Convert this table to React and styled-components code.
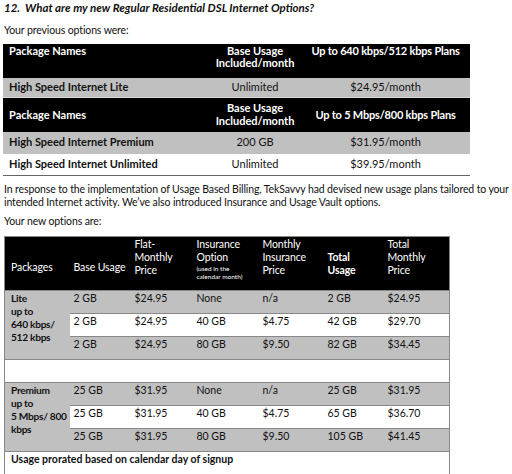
import React from "react";
import styled, { createGlobalStyle } from "styled-components";

const Global = createGlobalStyle`
  html, body { margin: 0; padding: 0; background: #fff; }
  body { font-family: Lato, "Open Sans", sans-serif; color: #111; }
`;

const Page = styled.div`
  width: 512px;
  height: 474px;
  overflow: hidden;
  padding: 1px 0 0 4px;
  box-sizing: border-box;
  font-size: 11px;
`;

const Title = styled.h2`
  margin: 0;
  font-size: 11.5px;
  font-weight: 700;
  font-style: italic;
  line-height: 13px;
`;

const Para = styled.p`
  margin: ${(p) => p.$mt || 0}px 0 0 0;
  font-size: 10.5px;
  line-height: 12.5px;
  letter-spacing: -0.12px;
  white-space: nowrap;
`;

const OldTable = styled.table`
  margin: 7px 0 0 -1px;
  width: 467px;
  border-collapse: collapse;
  table-layout: fixed;
  font-size: 11px;
  line-height: 12.5px;
  border-bottom: 1px solid #666;
`;

const OldHead = styled.tr`
  background: #000;
  color: #fff;
  font-weight: 700;
  height: ${(p) => p.$h}px;
  border-top: ${(p) => (p.$sep ? "1px solid #d8d8d8" : "none")};
`;

const OldRow = styled.tr`
  background: ${(p) => (p.$grey ? "#c0c0c0" : "#fff")};
  height: ${(p) => p.$h}px;
`;

const OldCell = styled.td`
  padding: 0 6px;
  vertical-align: ${(p) => p.$v || "middle"};
  text-align: ${(p) => p.$align || "left"};
  font-weight: ${(p) => (p.$bold ? 700 : "inherit")};
  padding-top: ${(p) => p.$pt || 0}px;
  white-space: nowrap;
  letter-spacing: ${(p) => p.$ls || 0}px;
`;

const NewTable = styled.table`
  margin: 8px 0 0 0;
  width: 445px;
  border-collapse: collapse;
  table-layout: fixed;
  font-size: 10.5px;
  line-height: 13px;
  border: 1px solid #888;
`;

const NewHead = styled.tr`
  background: #000;
  color: #fff;
  height: 54px;
`;

const HeadCell = styled.th`
  text-align: left;
  font-weight: ${(p) => (p.$bold ? 700 : 400)};
  vertical-align: top;
  white-space: nowrap;
  letter-spacing: -0.1px;
  padding: ${(p) => p.$pt}px 0 0 ${(p) => p.$pl || 4}px;
`;

const Small = styled.span`
  display: block;
  font-size: 6.5px;
  line-height: 8px;
  letter-spacing: 0;
  margin-top: 1px;
`;

const Row = styled.tr`
  background: ${(p) => (p.$grey ? "#c0c0c0" : "#fff")};
  height: 23px;
  border-top: 1px solid #888;
`;

const Cell = styled.td`
  vertical-align: top;
  white-space: nowrap;
  padding: 1px 0 0 ${(p) => p.$pl || 4}px;
  font-weight: ${(p) => (p.$bold ? 700 : 400)};
`;

const GroupCell = styled.td`
  background: #c0c0c0;
  vertical-align: top;
  font-weight: 700;
  font-size: 10.2px;
  white-space: nowrap;
  letter-spacing: -0.3px;
  padding: 1px 0 0 6px;
  line-height: 13px;
`;

const liteRows = [
  ["2 GB", "$24.95", "None", "n/a", "2 GB", "$24.95"],
  ["2 GB", "$24.95", "40 GB", "$4.75", "42 GB", "$29.70"],
  ["2 GB", "$24.95", "80 GB", "$9.50", "82 GB", "$34.45"],
];
const premRows = [
  ["25 GB", "$31.95", "None", "n/a", "25 GB", "$31.95"],
  ["25 GB", "$31.95", "40 GB", "$4.75", "65 GB", "$36.70"],
  ["25 GB", "$31.95", "80 GB", "$9.50", "105 GB", "$41.45"],
];

const widths = [65, 61, 62, 66, 65, 60, 66];

function Group({ label, rows }) {
  return rows.map((r, i) => (
    <Row key={i} $grey={i !== 1}>
      {i === 0 && <GroupCell rowSpan={3}>{label}</GroupCell>}
      {r.map((c, j) => (
        <Cell key={j}>{c}</Cell>
      ))}
    </Row>
  ));
}

export default function App() {
  return (
    <Page>
      <Global />
      <Title>12.&nbsp;&nbsp;What are my new Regular Residential DSL Internet Options?</Title>
      <Para $mt={10}>Your previous options were:</Para>
      <OldTable>
        <colgroup>
          <col style={{ width: 206 }} />
          <col style={{ width: 92 }} />
          <col />
        </colgroup>
        <tbody>
          <OldHead $h={34}>
            <OldCell $v="top" $pt={1}>Package Names</OldCell>
            <OldCell $v="top" $pt={1} $align="center">Base Usage<br />Included/month</OldCell>
            <OldCell $v="top" $pt={1} $align="center" $ls={-0.2}>Up to 640 kbps/512 kbps Plans</OldCell>
          </OldHead>
          <OldRow $grey $h={20}>
            <OldCell $bold>High Speed Internet Lite</OldCell>
            <OldCell $align="center">Unlimited</OldCell>
            <OldCell $align="center">$24.95/month</OldCell>
          </OldRow>
          <OldHead $h={34} $sep>
            <OldCell>Package Names</OldCell>
            <OldCell $align="center">Base Usage<br />Included/month</OldCell>
            <OldCell $align="center" $ls={-0.2}>Up to 5 Mbps/800 kbps Plans</OldCell>
          </OldHead>
          <OldRow $grey $h={22}>
            <OldCell $bold>High Speed Internet Premium</OldCell>
            <OldCell $align="center">200 GB</OldCell>
            <OldCell $align="center">$31.95/month</OldCell>
          </OldRow>
          <OldRow $h={22}>
            <OldCell $bold>High Speed Internet Unlimited</OldCell>
            <OldCell $align="center">Unlimited</OldCell>
            <OldCell $align="center">$39.95/month</OldCell>
          </OldRow>
        </tbody>
      </OldTable>
      <Para $mt={7}>
        In response to the implementation of Usage Based Billing, TekSavvy had devised new usage plans tailored to your
        <br />
        intended Internet activity. We’ve also introduced Insurance and Usage Vault options.
      </Para>
      <Para $mt={7}>Your new options are:</Para>
      <NewTable>
        <colgroup>
          {widths.map((w, i) => (
            <col key={i} style={{ width: w }} />
          ))}
        </colgroup>
        <tbody>
          <NewHead>
            <HeadCell $pt={24} $pl={6}>Packages</HeadCell>
            <HeadCell $pt={24}>Base Usage</HeadCell>
            <HeadCell $pt={1}>Flat-<br />Monthly<br />Price</HeadCell>
            <HeadCell $pt={1}>Insurance<br />Option<Small>(used in the<br />calendar month)</Small></HeadCell>
            <HeadCell $pt={1}>Monthly<br />Insurance<br />Price</HeadCell>
            <HeadCell $pt={14} $bold>Total<br />Usage</HeadCell>
            <HeadCell $pt={1}>Total<br />Monthly<br />Price</HeadCell>
          </NewHead>
          <Group label={<>Lite<br />up to<br />640 kbps/<br />512 kbps</>} rows={liteRows} />
          <Row>
            <Cell colSpan={7}>&nbsp;</Cell>
          </Row>
          <Group label={<>Premium<br />up to<br />5 Mbps/ 800<br />kbps</>} rows={premRows} />
          <Row>
            <Cell colSpan={7} $bold $pl={6}>Usage prorated based on calendar day of signup</Cell>
          </Row>
        </tbody>
      </NewTable>
    </Page>
  );
}
